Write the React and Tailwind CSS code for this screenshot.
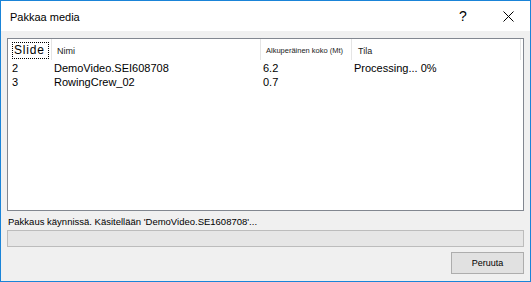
import React from "react";

const rows = [
  { slide: "2", name: "DemoVideo.SEI608708", size: "6.2", state: "Processing... 0%" },
  { slide: "3", name: "RowingCrew_02", size: "0.7", state: "" },
];

const App = () => {
  return (
    <div className="w-[531px] h-[282px] border border-[#1a84d8] bg-[#f0f0f0] flex flex-col font-['Liberation_Sans',Arial,sans-serif] text-black">
      {/* title bar */}
      <div className="h-[30px] bg-white flex items-center pl-[9px] pr-[16px]">
        <span className="text-[11px] flex-1 pt-[2px]">Pakkaa media</span>
        <span className="text-[14px] w-[14px] text-center mr-[33px] pt-[1px]">?</span>
        <svg width="11" height="11" viewBox="0 0 11 11" className="mt-[1px]">
          <path d="M0.5 0.5 L10.5 10.5 M10.5 0.5 L0.5 10.5" stroke="#000" strokeWidth="1" />
        </svg>
      </div>

      <div className="flex-1 flex flex-col px-[6px] pt-[7px]">
        {/* list */}
        <div className="h-[173px] border border-[#828790] bg-white">
          <div className="grid grid-cols-[43px_209px_91px_170px] h-[21px] items-stretch">
            <div className="flex items-center pl-[4px] pr-[2px] pt-[1px]">
              <span className="border border-dotted border-black h-[17px] w-full flex items-center pl-[1px] text-[12px] tracking-[0.8px]">
                Slide
              </span>
            </div>
            <div className="border-l border-[#e5e5e5] flex items-center pl-[5px] pt-[5px] text-[9px] text-[#222]">Nimi</div>
            <div className="border-l border-[#e5e5e5] flex items-center pl-[5px] pt-[3px] text-[7.5px] text-[#222]">
              Alkuperäinen koko (Mt)
            </div>
            <div className="border-x border-[#e5e5e5] flex items-center pl-[6px] pt-[5px] text-[9px] text-[#222]">Tila</div>
          </div>
          {rows.map((r) => (
            <div key={r.slide} className="grid grid-cols-[43px_209px_91px_170px] h-[14px] items-center text-[11px] leading-[14px] pt-[1px]">
              <div className="pl-[4px]">{r.slide}</div>
              <div className="pl-[3px]">{r.name}</div>
              <div className="pl-[3px]">{r.size}</div>
              <div className="pl-[3px]">{r.state}</div>
            </div>
          ))}
        </div>

        {/* status */}
        <div className="h-[19px] flex items-center pl-[1px] text-[9.5px] pt-[3px]">
          Pakkaus käynnissä. Käsitellään 'DemoVideo.SE1608708'...
        </div>
        <div className="h-[17px] border border-[#bcbcbc] bg-[#e6e6e6]"></div>

        <div className="flex justify-end mt-[5px]">
          <button className="w-[73px] h-[22px] border border-[#adadad] bg-[#e1e1e1] text-[9px] flex items-center justify-center pt-[1px]">
            Peruuta
          </button>
        </div>
      </div>
    </div>
  );
};

export default App;
